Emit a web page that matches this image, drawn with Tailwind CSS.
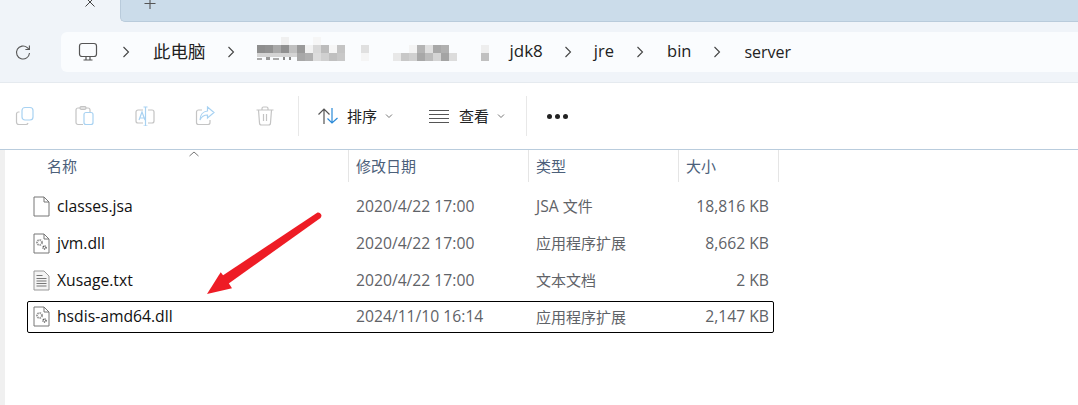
<!DOCTYPE html>
<html lang="en">
<head>
    <meta charset="UTF-8" />
    <title>server</title>
    <script src="https://cdn.jsdelivr.net/npm/@tailwindcss/browser@4"></script>
</head>
<body class="bg-white w-[1078px] h-[405px] overflow-hidden relative font-['Open_Sans','Noto_Sans_CJK_SC',sans-serif]">

    <!-- Tab strip -->
    <div class="h-[22px] bg-[#f0f4f9] flex">
        <div class="w-[120px] flex justify-end">
            <svg class="mr-[24px] -mt-[4px]" width="12" height="12" viewBox="0 0 12 12" fill="none" stroke="#444" stroke-width="1"><path d="M1.500 1.500l9 9M10.500 1.500l-9 9"/></svg>
        </div>
        <div class="flex-1 bg-[#cbdcea] border-b border-l border-[#b9cbdb] rounded-bl-[5px] pl-[23px]">
            <svg class="-mt-[2px]" width="12" height="12" viewBox="0 0 12 12" fill="none" stroke="#555" stroke-width="1.100"><path d="M6 0v11M.5 5.500h11"/></svg>
        </div>
    </div>

    <!-- Address row -->
    <div class="h-[60px] bg-[#f0f4f9] flex items-center">
        <div class="w-[61px] flex justify-center pr-[14px]">
            <svg width="17" height="17" viewBox="0 0 17 17" fill="none" stroke="#555" stroke-width="1.100"><path d="M14.500 9a6.500 6.500 0 1 1-2.200-5.400l1.900 1.700"/><path d="M14.400 1.500v4h-4"/></svg>
        </div>
        <div class="flex-1 h-[40px] bg-[#fafcfe] rounded-l-[6px] flex items-center text-[16px] text-[#222]">
            <svg class="ml-[17px]" width="20" height="20" viewBox="0 0 20 20" fill="none" stroke="#555" stroke-width="1.200"><rect x="1.500" y="1.500" width="17" height="13" rx="2.500"/><path d="M8 15v2.500M12 15v2.500M5.500 18h9"/></svg>
            <svg class="ml-[24px]" width="8" height="12" viewBox="0 0 8 12" fill="none" stroke="#444" stroke-width="1.100"><path d="M1.500 1l5 5-5 5"/></svg>
            <span class="ml-[23px] -mt-[2px] text-[17.500px]">此电脑</span>
            <svg class="ml-[21px]" width="8" height="12" viewBox="0 0 8 12" fill="none" stroke="#444" stroke-width="1.100"><path d="M1.500 1l5 5-5 5"/></svg>
            <!-- blurred out part of the path -->
            <svg class="ml-[21px]" width="236" height="30" viewBox="0 0 236 30" shape-rendering="crispEdges">
                <rect x="25" y="0" width="8" height="8" fill="#f0f0f0"/>
                <rect x="57" y="0" width="8" height="8" fill="#f6f6f6"/>
                <rect x="1" y="8" width="8" height="8" fill="#8e8e8e"/>
                <rect x="9" y="8" width="8" height="8" fill="#929292"/>
                <rect x="17" y="8" width="8" height="8" fill="#a9a9a9"/>
                <rect x="25" y="8" width="8" height="8" fill="#909090"/>
                <rect x="33" y="8" width="8" height="8" fill="#c0c0c0"/>
                <rect x="41" y="8" width="8" height="8" fill="#9a9a9a"/>
                <rect x="49" y="8" width="8" height="8" fill="#f2f2f2"/>
                <rect x="57" y="8" width="8" height="8" fill="#d8d8d8"/>
                <rect x="65" y="8" width="8" height="8" fill="#bcbcbc"/>
                <rect x="73" y="8" width="8" height="8" fill="#f6f6f6"/>
                <rect x="81" y="8" width="8" height="8" fill="#c4c4c4"/>
                <rect x="1" y="16" width="40" height="4" fill="#d4d4d4"/>
                <rect x="1" y="21" width="5" height="2" fill="#aaa"/>
                <rect x="10" y="20" width="4" height="3" fill="#999"/>
                <rect x="17" y="21" width="6" height="2" fill="#aaa"/>
                <rect x="27" y="20" width="2" height="3" fill="#888"/>
                <rect x="33" y="20" width="2" height="3" fill="#888"/>
                <rect x="41" y="16" width="8" height="8" fill="#a8a8a8"/>
                <rect x="49" y="16" width="8" height="8" fill="#b0b0b0"/>
                <rect x="57" y="16" width="8" height="8" fill="#dcdcdc"/>
                <rect x="65" y="16" width="8" height="8" fill="#d0d0d0"/>
                <rect x="73" y="16" width="8" height="8" fill="#c0c0c0"/>
                <rect x="81" y="16" width="8" height="8" fill="#c8c8c8"/>
                <rect x="105" y="8" width="8" height="8" fill="#e0e0e0"/>
                <rect x="105" y="16" width="8" height="8" fill="#f5f5f5"/>
                <rect x="137" y="16" width="8" height="8" fill="#e8e8e8"/>
                <rect x="145" y="16" width="8" height="8" fill="#c8c8c8"/>
                <rect x="153" y="8" width="8" height="8" fill="#f4f4f4"/>
                <rect x="153" y="16" width="8" height="8" fill="#d0d0d0"/>
                <rect x="161" y="8" width="8" height="8" fill="#b4b4b4"/>
                <rect x="161" y="16" width="8" height="8" fill="#a8a8a8"/>
                <rect x="169" y="8" width="8" height="8" fill="#e0e0e0"/>
                <rect x="169" y="16" width="8" height="8" fill="#bcbcbc"/>
                <rect x="177" y="8" width="8" height="8" fill="#a8a8a8"/>
                <rect x="177" y="16" width="8" height="8" fill="#d4d4d4"/>
                <rect x="185" y="8" width="8" height="8" fill="#b0b0b0"/>
                <rect x="185" y="16" width="8" height="8" fill="#a4a4a4"/>
                <rect x="193" y="16" width="8" height="8" fill="#dcdcdc"/>
                <rect x="225" y="8" width="8" height="8" fill="#eeeeee"/>
                <rect x="225" y="16" width="8" height="8" fill="#c0c0c0"/>
            </svg>
            <span class="ml-[18px] -mt-[2px] text-[17px]">jdk8</span>
            <svg class="ml-[21px]" width="8" height="12" viewBox="0 0 8 12" fill="none" stroke="#444" stroke-width="1.100"><path d="M1.500 1l5 5-5 5"/></svg>
            <span class="ml-[22px] -mt-[2px] text-[16.500px]">jre</span>
            <svg class="ml-[22px]" width="8" height="12" viewBox="0 0 8 12" fill="none" stroke="#444" stroke-width="1.100"><path d="M1.500 1l5 5-5 5"/></svg>
            <span class="ml-[23px] -mt-[2px] text-[16.500px]">bin</span>
            <svg class="ml-[22px]" width="8" height="12" viewBox="0 0 8 12" fill="none" stroke="#444" stroke-width="1.100"><path d="M1.500 1l5 5-5 5"/></svg>
            <span class="ml-[23px]">server</span>
        </div>
    </div>

    <!-- Toolbar -->
    <div class="h-[68px] bg-white border-t border-b border-[#e5eaef] border-b-[#b9ccdd] flex items-center text-[15px] text-[#222]">
        <div class="w-[299px] h-[40px] border-r border-[#e8e8e8] flex items-center pl-[15px] gap-[40px]">
            <svg width="20" height="20" viewBox="0 0 20 20" fill="none" stroke-width="1.200"><path d="M4.500 6H3.500A2 2 0 0 0 1.500 8v8a2.500 2.500 0 0 0 2.500 2.500h7a2 2 0 0 0 2-1.500" stroke="#c4c4c4"/><rect x="7" y="1.500" width="11" height="12.500" rx="3" stroke="#a8d2f2"/></svg>
            <svg width="20" height="20" viewBox="0 0 20 20" fill="none" stroke-width="1.200"><path d="M8 18.500H3a2 2 0 0 1-2-2V4a2 2 0 0 1 2-2h10a2 2 0 0 1 2 2v2" stroke="#c4c4c4"/><rect x="5" y=".500" width="6" height="3" rx="1.500" stroke="#c4c4c4"/><rect x="9" y="6.500" width="9" height="12" rx="2" stroke="#a8d2f2"/></svg>
            <svg width="20" height="20" viewBox="0 0 20 20" fill="none" stroke-width="1.200"><path d="M8 4H3a2 2 0 0 0-2 2v9a2 2 0 0 0 2 2h5M13 4h4a2 2 0 0 1 2 2v9a2 2 0 0 1-2 2h-4" stroke="#c4c4c4"/><path d="M10.500 1v19M8.500 1h4M8.500 20h4M4 14l3-8 3 8M5 12h4" stroke="#a8d2f2"/></svg>
            <svg width="20" height="20" viewBox="0 0 20 20" fill="none" stroke-width="1.200"><path d="M7 4H3.500a2 2 0 0 0-2 2v10.500a2 2 0 0 0 2 2H13a2 2 0 0 0 2-2V14" stroke="#c4c4c4"/><path d="M12.500 1l6.500 5.500-6.500 5.500V9c-3.500 0-6 1.500-7.500 5 0-5 3-8.500 7.500-9z" stroke="#a8d2f2"/></svg>
            <svg width="20" height="20" viewBox="0 0 20 20" fill="none" stroke="#c4c4c4" stroke-width="1.200"><path d="M1.500 4h17M7 4V2.500a1.500 1.500 0 0 1 1.500-1.500h3A1.500 1.500 0 0 1 13 2.500V4M3.500 4l1 13a2 2 0 0 0 2 2h7a2 2 0 0 0 2-2l1-13M8.500 8v7M11.500 8v7"/></svg>
        </div>
        <div class="w-[228px] h-[40px] border-r border-[#e8e8e8] flex items-center pl-[18px]">
            <svg width="22" height="18" viewBox="0 0 22 18" fill="none" stroke-width="1.200"><path d="M7 17V2M1.500 7.500L7 2l5.500 5.500" stroke="#555"/><path d="M15 1v15M10.500 11.500L15 16l5.500-5" stroke="#2a8ad8"/></svg>
            <span class="ml-[8px]">排序</span>
            <svg class="ml-[8px]" width="8" height="6" viewBox="0 0 8 6" fill="none" stroke="#777"><path d="M1 1.500l3 3 3-3"/></svg>
            <svg class="ml-[36px]" width="20" height="14" viewBox="0 0 20 14" fill="none" stroke="#555" stroke-width="1.100"><path d="M0 1.500h20M0 5.500h20M0 9.500h20M0 13.500h20"/></svg>
            <span class="ml-[10px]">查看</span>
            <svg class="ml-[8px]" width="8" height="6" viewBox="0 0 8 6" fill="none" stroke="#777"><path d="M1 1.500l3 3 3-3"/></svg>
        </div>
        <div class="ml-[20px] flex gap-[3px]">
            <span class="w-[5px] h-[5px] rounded-full bg-[#222]"></span>
            <span class="w-[5px] h-[5px] rounded-full bg-[#222]"></span>
            <span class="w-[5px] h-[5px] rounded-full bg-[#222]"></span>
        </div>
    </div>

    <!-- File list -->
    <div class="border-l-[5px] border-[#f0f0f0] h-[255px]">
        <!-- Column header -->
        <div class="flex h-[32px] text-[15px] text-[#4c607a]">
            <div class="w-[344px] h-full pl-[42px] pt-[5px] border-r border-[#e5e5e5] relative">
                名称
                <svg class="absolute left-[184px] top-[1px]" width="10" height="6" viewBox="0 0 10 6" fill="none" stroke="#777"><path d="M.500 5L5 1l4.500 4"/></svg>
            </div>
            <div class="w-[180px] h-full pl-[7px] pt-[5px] border-r border-[#e5e5e5]">修改日期</div>
            <div class="w-[150px] h-full pl-[7px] pt-[5px] border-r border-[#e5e5e5]">类型</div>
            <div class="w-[100px] h-full pl-[7px] pt-[5px] border-r border-[#e5e5e5]">大小</div>
        </div>

        <!-- Rows -->
        <div class="ml-[22px] mt-[6px] w-[747px] flex flex-col text-[15.700px] text-[#5f6368]">
            <div class="h-[37px] grid grid-cols-[322px_180px_150px_95px] items-center">
                <div class="flex items-center text-[#111]">
                    <svg class="ml-[6px]" width="17" height="21" viewBox="0 0 17 21" fill="none" stroke="#777"><path d="M1 1h10l5 5v14H1zM11 1v5h5"/></svg>
                    <span class="ml-[7px]">classes.jsa</span>
                </div>
                <span class="pl-[7px]">2020/4/22 17:00</span>
                <span class="pl-[7px]">JSA <span class="text-[15px]">文件</span></span>
                <span class="text-right pr-[5px]">18,816 KB</span>
            </div>
            <div class="h-[37px] grid grid-cols-[322px_180px_150px_95px] items-center">
                <div class="flex items-center text-[#111]">
                    <svg class="ml-[6px]" width="17" height="21" viewBox="0 0 17 21" fill="none" stroke="#777"><path d="M1 1h10l5 5v14H1zM11 1v5h5"/><circle cx="6.500" cy="9.500" r="2.500" stroke="#999" stroke-width="2" stroke-dasharray="1.500 .8"/><circle cx="11.500" cy="14.500" r="1.500" stroke="#555" stroke-width="1.500" stroke-dasharray="1 .6"/></svg>
                    <span class="ml-[7px]">jvm.dll</span>
                </div>
                <span class="pl-[7px]">2020/4/22 17:00</span>
                <span class="pl-[7px] text-[15px]">应用程序扩展</span>
                <span class="text-right pr-[5px]">8,662 KB</span>
            </div>
            <div class="h-[37px] grid grid-cols-[322px_180px_150px_95px] items-center">
                <div class="flex items-center text-[#111]">
                    <svg class="ml-[6px]" width="17" height="21" viewBox="0 0 17 21" fill="#f4f4f4" stroke="#999"><path d="M1 1h10l5 5v14H1z"/><path d="M3.500 5.500h6M3.500 8.500h10M3.500 11h10M3.500 13.500h10M3.500 16h10" stroke="#777"/></svg>
                    <span class="ml-[7px]">Xusage.txt</span>
                </div>
                <span class="pl-[7px]">2020/4/22 17:00</span>
                <span class="pl-[7px] text-[15px]">文本文档</span>
                <span class="text-right pr-[5px]">2 KB</span>
            </div>
            <div class="mt-[2px] h-[32px] grid grid-cols-[321px_180px_150px_94px] items-center border border-black rounded-[2px]">
                <div class="flex items-center text-[#111]">
                    <svg class="ml-[5px]" width="17" height="21" viewBox="0 0 17 21" fill="none" stroke="#777"><path d="M1 1h10l5 5v14H1zM11 1v5h5"/><circle cx="6.500" cy="9.500" r="2.500" stroke="#999" stroke-width="2" stroke-dasharray="1.500 .8"/><circle cx="11.500" cy="14.500" r="1.500" stroke="#555" stroke-width="1.500" stroke-dasharray="1 .6"/></svg>
                    <span class="ml-[7px]">hsdis-amd64.dll</span>
                </div>
                <span class="pl-[7px]">2024/11/10 16:14</span>
                <span class="pl-[7px] text-[15px]">应用程序扩展</span>
                <span class="text-right pr-[4px]">2,147 KB</span>
            </div>
        </div>
    </div>

    <!-- Red annotation arrow -->
    <svg class="absolute left-0 top-0 pointer-events-none" width="1078" height="405" viewBox="0 0 1078 405">
        <path d="M317.500 212.500L222 276L228 284L320.500 218A3.300 3.300 0 0 0 317.500 212.500z" fill="#ee1c25"/>
        <path d="M207 294L220.700 272.300L226 279L232 288.300z" fill="#ee1c25"/>
    </svg>

</body>
</html>
